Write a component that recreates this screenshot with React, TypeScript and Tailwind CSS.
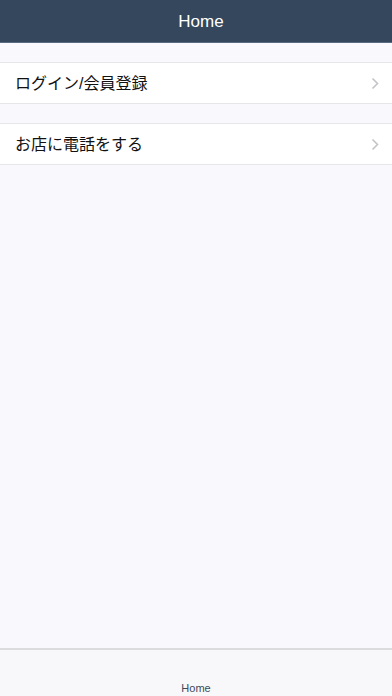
import React from "react";

const font = { fontFamily: '"Liberation Sans", "Noto Sans CJK JP", sans-serif' };

function Chevron() {
  return (
    <svg width="8" height="13" viewBox="0 0 8 13" className="shrink-0">
      <path d="M1.5 1.5 L6.5 6.5 L1.5 11.5" fill="none" stroke="#c4c4c8" strokeWidth="1.6" />
    </svg>
  );
}

function Row({ label }: { label: string }) {
  return (
    <div className="h-[42px] bg-white border-y border-[#e6e6ea] flex items-center justify-between pl-[15px] pr-[13px]">
      <span className="text-[16px] text-[#111] pt-[1px]">{label}</span>
      <Chevron />
    </div>
  );
}

export default function App() {
  return (
    <div className="w-[392px] h-[696px] bg-[#f9f8fc] flex flex-col" style={font}>
      <div className="h-[43px] bg-[#35475d] border-b border-[#5a6b80] flex items-center justify-center shrink-0 pt-[2px] pl-[10px]">
        <span className="text-white text-[17px]">Home</span>
      </div>
      <div className="flex-1 flex flex-col pt-[19px] gap-[19px]">
        <Row label="ログイン/会員登録" />
        <Row label="お店に電話をする" />
      </div>
      <div className="h-[48px] bg-[#f8f8fa] border-t-2 border-[#dcdcde] flex items-end justify-center pb-0 shrink-0">
        <span className="text-[11px] text-[#3c4a5c]">Home</span>
      </div>
    </div>
  );
}
